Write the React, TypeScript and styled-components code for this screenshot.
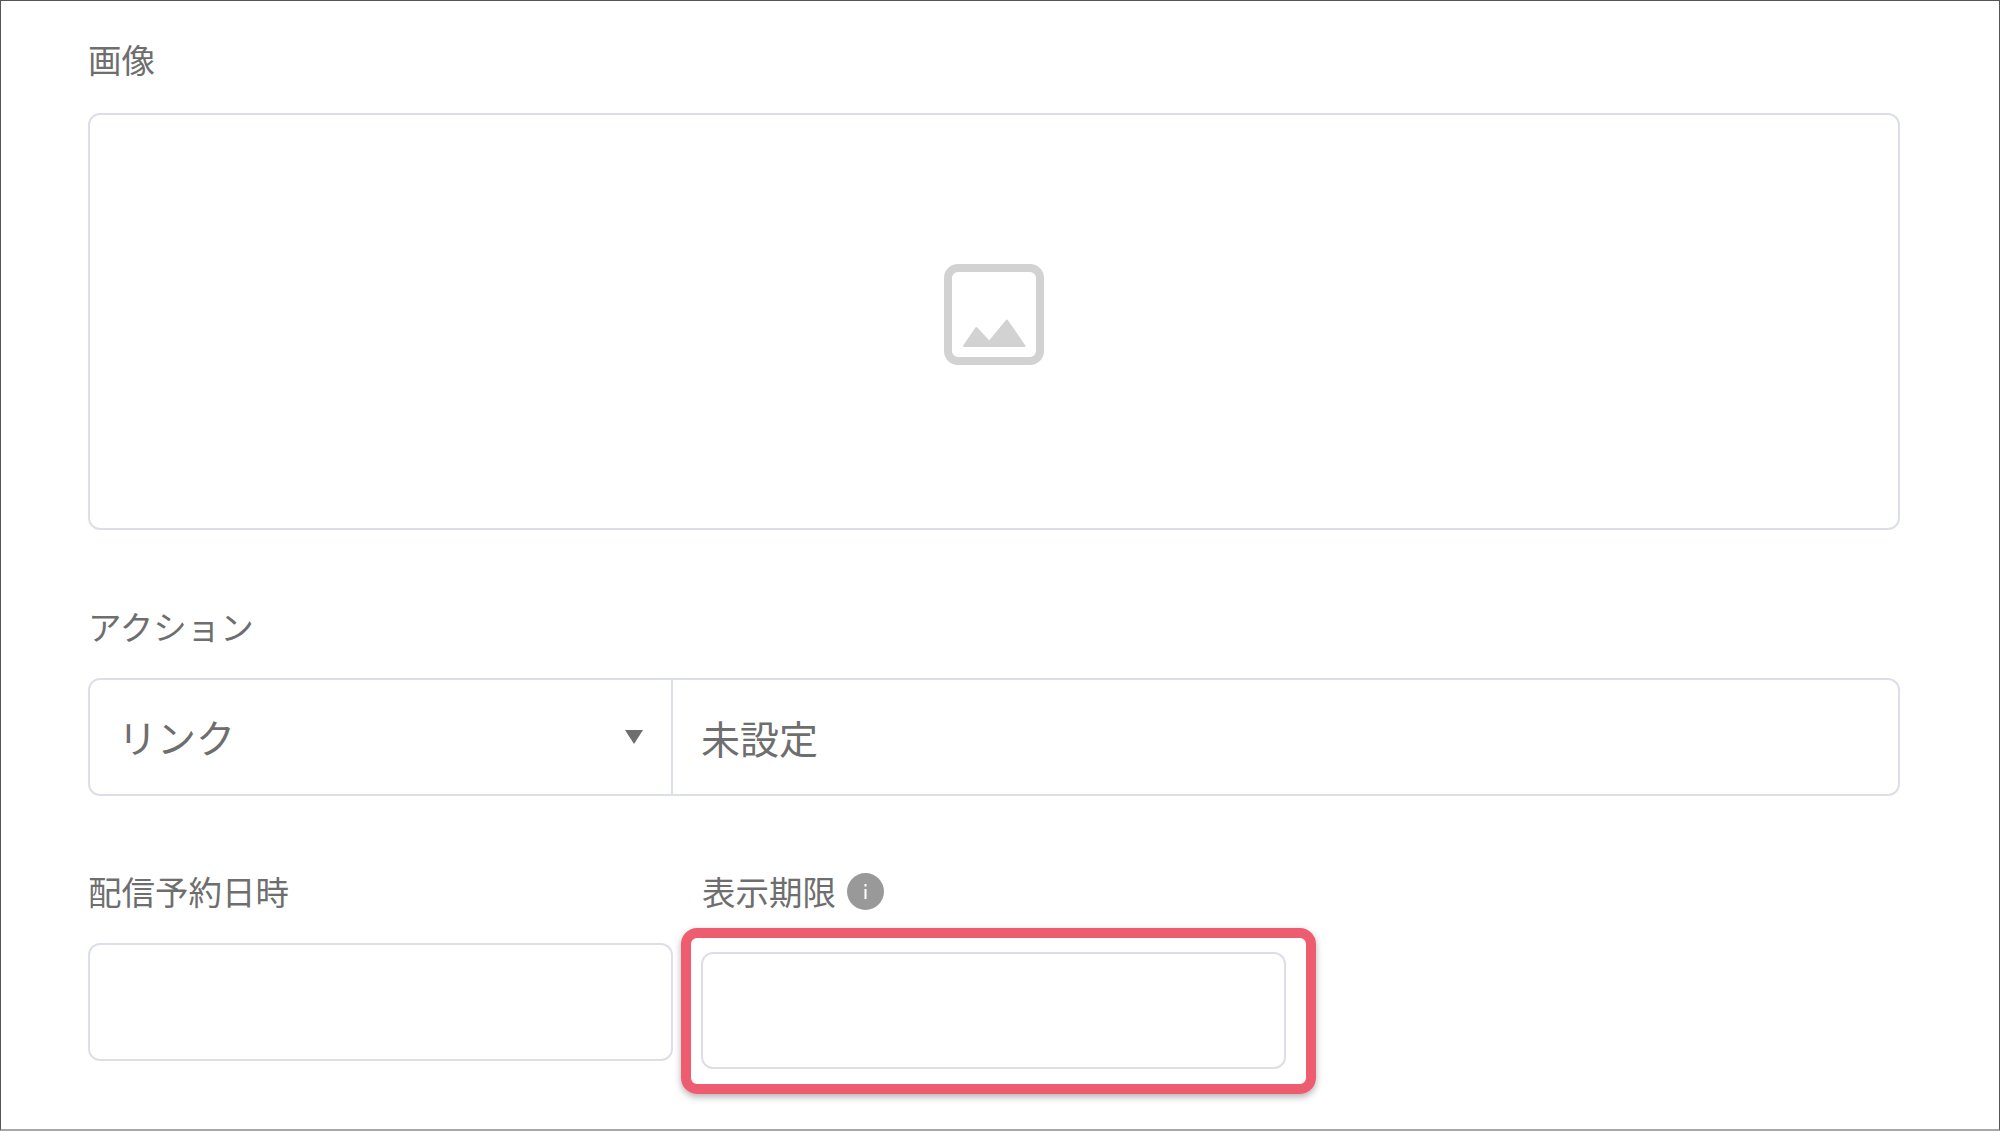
import React from "react";
import styled, {createGlobalStyle} from "styled-components";

const GlobalStyle = createGlobalStyle`
  html, body {
    margin: 0;
    padding: 0;
    background: #fff;
  }
`

const Frame = styled.div`
  box-sizing: border-box;
  width: 2000px;
  height: 1131px;
  padding: 40px 99px 0 87px;
  background: #fff;
  border-style: solid;
  border-color: #555;
  border-width: 1px 1px 2px 1px;
  border-bottom-color: #a8a8a8;
  font-family: "Noto Sans CJK JP", "Liberation Sans", sans-serif;
  color: #6e6e6e;
  overflow: hidden;
`

const Label = styled.div<{$gap?: number}>`
  box-sizing: border-box;
  display: flex;
  align-items: center;
  gap: 11px;
  height: 40px;
  padding-bottom: 4px;
  margin-bottom: ${p => p.$gap ?? 30}px;
  font-size: 33.5px;
  line-height: 36px;
`

const ImageBox = styled.div`
  box-sizing: border-box;
  display: flex;
  align-items: center;
  justify-content: center;
  height: 417px;
  padding-bottom: 14px;
  margin-bottom: 78px;
  border: 2px solid #dcdfe8;
  border-radius: 12px;
`

const ActionBox = styled.div`
  box-sizing: border-box;
  display: flex;
  height: 118px;
  margin-bottom: 77px;
  border: 2px solid #dcdfe8;
  border-radius: 12px;
  font-size: 39px;
`

const Select = styled.div`
  box-sizing: border-box;
  display: flex;
  align-items: center;
  justify-content: space-between;
  width: 583px;
  padding: 0 28px 2px 28px;
  border-right: 2px solid #dcdfe8;
`

const Caret = styled.span`
  width: 0;
  height: 0;
  margin-top: 2px;
  border-left: 9px solid transparent;
  border-right: 9px solid transparent;
  border-top: 14px solid #6e6e6e;
`

const Value = styled.div`
  display: flex;
  align-items: center;
  padding-left: 28px;
`

const Row = styled.div`
  display: flex;
  gap: 29px;
`

const Field = styled.div`
  width: 585px;
`

const DateInput = styled.input`
  display: block;
  box-sizing: border-box;
  width: 100%;
  height: 118px;
  padding: 0 28px;
  background: #fff;
  border: 2px solid #dcdfe8;
  border-radius: 12px;
  outline: none;
`

const Highlight = styled.div`
  width: 635px;
  box-sizing: border-box;
  height: 166px;
  margin: -15px 0 0 -21px;
  padding: 14px 20px 15px 10px;
  border: 10px solid #ee5c70;
  border-radius: 16px;
  box-shadow: 0 3px 7px rgba(0, 0, 0, 0.3);

  ${DateInput} {
    height: 117px;
  }
`

const InfoBadge = styled.span`
  display: inline-flex;
  width: 37px;
  height: 37px;
  border-radius: 50%;
  background: #999;
`

const ImagePlaceholder = () => (
    <svg width="100" height="101" viewBox="0 0 100 101" fill="none">
        <rect x="4" y="4" width="92" height="93" rx="10" stroke="#d2d2d2" strokeWidth="8"/>
        <path
            d="M20 82 L32.3 64 L45.3 78 L63 56.5 L80.5 82 Z"
            fill="#d2d2d2"
            stroke="#d2d2d2"
            strokeWidth="2"
            strokeLinejoin="round"
        />
    </svg>
)

const InfoIcon = () => (
    <InfoBadge>
        <svg width="37" height="37" viewBox="0 0 37 37" fill="#fff">
            <rect x="17.5" y="11" width="2" height="2.5"/>
            <rect x="17.5" y="16" width="2" height="10"/>
        </svg>
    </InfoBadge>
)

const App = () => {
    return (
        <Frame>
            <GlobalStyle/>
            <Label $gap={32}>画像</Label>
            <ImageBox>
                <ImagePlaceholder/>
            </ImageBox>

            <Label>アクション</Label>
            <ActionBox>
                <Select>
                    リンク
                    <Caret/>
                </Select>
                <Value>未設定</Value>
            </ActionBox>

            <Row>
                <Field>
                    <Label>配信予約日時</Label>
                    <DateInput readOnly/>
                </Field>
                <Field>
                    <Label>表示期限 <InfoIcon/></Label>
                    <Highlight>
                        <DateInput readOnly/>
                    </Highlight>
                </Field>
            </Row>
        </Frame>
    )
}

export default App;
